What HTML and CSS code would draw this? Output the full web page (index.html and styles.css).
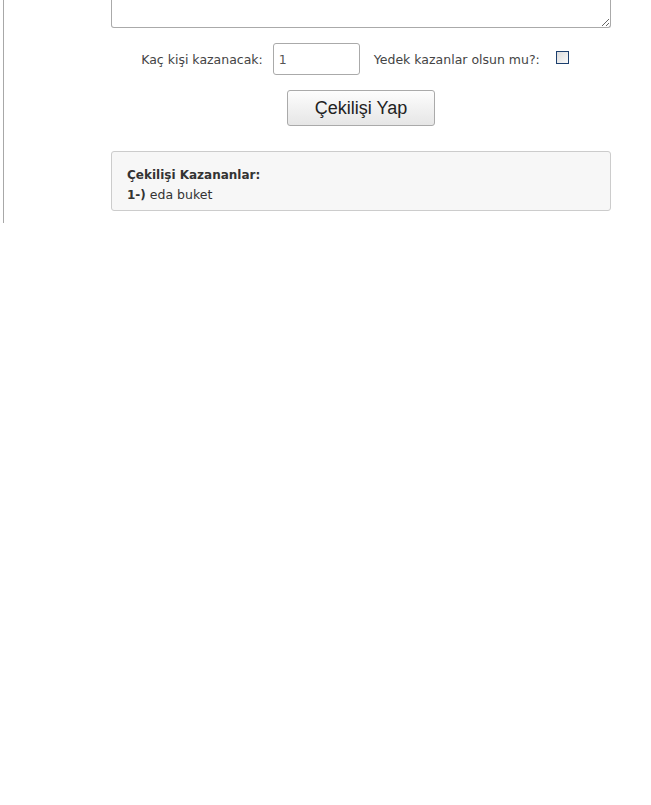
FILE: index.html
```html
<!DOCTYPE html>
<html lang="tr">
<head>
    <meta charset="UTF-8">
    <title>Çekiliş Yap</title>
    <link rel="stylesheet" href="styles.css">
</head>
<body>
    <div class="page">
        <div class="draw-form">
            <textarea class="names"></textarea>

            <div class="options">
                <label class="opt-label" for="count">Kaç kişi kazanacak:</label>
                <input type="text" id="count" class="count-input" value="1">
                <label class="opt-label" for="spare">Yedek kazanlar olsun mu?:</label>
                <input type="checkbox" id="spare" class="spare-check">
            </div>

            <div class="actions">
                <button class="draw-button">Çekilişi Yap</button>
            </div>

            <div class="results">
                <b>Çekilişi Kazananlar:</b><br>
                <b>1-)</b> eda buket
            </div>
        </div>
    </div>
</body>
</html>
```

FILE: styles.css
```css
body {
    margin: 0;
    background: #fff;
    font-family: 'DejaVu Sans', Verdana, sans-serif;
    font-size: 12.5px;
    color: #333;
}

.page {
    margin-left: 3px;
    border-left: 1px solid #a8a8a8;
    padding-bottom: 12px;
}

.draw-form {
    width: 500px;
    margin-left: 107px;
}

/* textarea is scrolled out of view, only its bottom part shows */
.names {
    display: block;
    box-sizing: border-box;
    width: 500px;
    height: 28px;
    margin: 0;
    border: 1px solid #aaa;
    border-top: 0;
    border-radius: 0 0 3px 3px;
    resize: vertical;
}

.options {
    display: flex;
    align-items: center;
    justify-content: center;
    margin-top: 15px;
    padding-right: 12px;
}

.opt-label {
    color: #444;
}

.count-input {
    box-sizing: border-box;
    width: 87px;
    height: 32px;
    margin: 0 14px 0 10px;
    padding: 0 5px;
    border: 1px solid #aaa;
    border-radius: 3px;
    font-family: inherit;
    font-size: 12.5px;
    color: #555;
}

.spare-check {
    appearance: none;
    box-sizing: border-box;
    width: 13px;
    height: 13px;
    margin: 0 0 4px 16px;
    border: 1px solid #1c3f6e;
    background: linear-gradient(135deg, #dcdcdc, #fafafa);
}

.actions {
    display: flex;
    justify-content: center;
    margin-top: 15px;
}

.draw-button {
    width: 148px;
    height: 36px;
    border: 1px solid #aaa;
    border-radius: 3px;
    background: linear-gradient(#fdfdfd, #e6e6e6);
    font-family: 'Liberation Sans', Arial, sans-serif;
    font-size: 18px;
    color: #222;
}

.results {
    height: 38px;
    margin-top: 25px;
    padding: 13px 15px 7px;
    background: #f7f7f7;
    border: 1px solid #ccc;
    border-radius: 3px;
    line-height: 19px;
}

.results b {
    font-size: 12px;
}
```
